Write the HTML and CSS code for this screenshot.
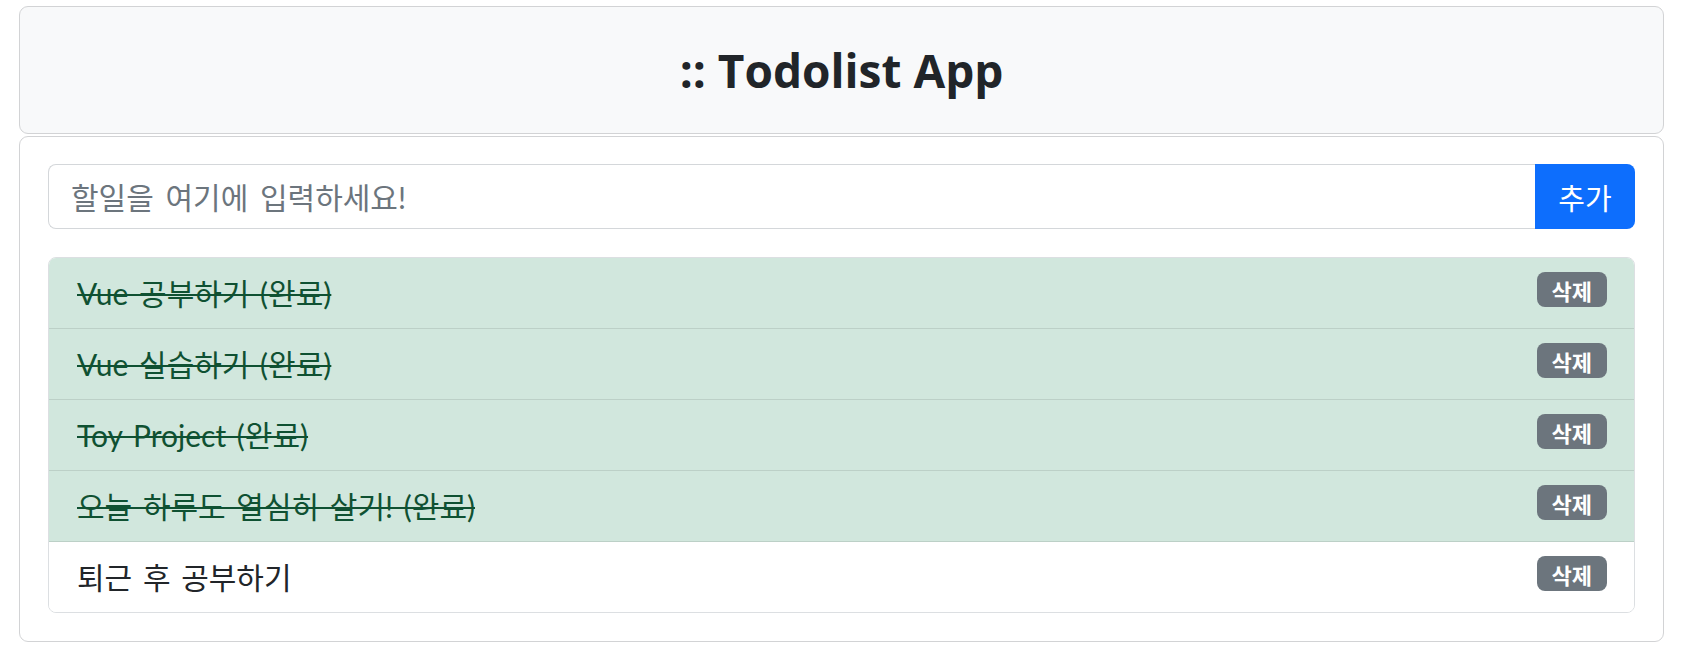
FILE: index.html
```html
<!DOCTYPE html>
<html lang="ko">
<head>
<meta charset="utf-8">
<title>Todolist App</title>
<link rel="stylesheet" href="styles.css">
</head>
<body>
<div class="app">
  <header class="card header-card">
    <h1 class="title">:: Todolist App</h1>
  </header>
  <main class="card body-card">
    <div class="input-group">
      <input class="todo-input" type="text" placeholder="할일을 여기에 입력하세요!">
      <button class="add-btn" type="button">추가</button>
    </div>
    <ul class="todo-list">
      <li class="todo-item done"><span class="todo-text">Vue 공부하기 (완료)</span><span class="badge">삭제</span></li>
      <li class="todo-item done"><span class="todo-text">Vue 실습하기 (완료)</span><span class="badge">삭제</span></li>
      <li class="todo-item done"><span class="todo-text">Toy Project (완료)</span><span class="badge">삭제</span></li>
      <li class="todo-item done"><span class="todo-text">오늘 하루도 열심히 살기! (완료)</span><span class="badge">삭제</span></li>
      <li class="todo-item"><span class="todo-text">퇴근 후 공부하기</span><span class="badge">삭제</span></li>
    </ul>
  </main>
</div>
</body>
</html>
```

FILE: styles.css
```css
* { box-sizing: border-box; }
html, body { margin: 0; padding: 0; background: #fff; }
body {
  font-family: "Lato", "Noto Sans CJK KR", sans-serif;
  color: #212529;
}
.app {
  padding: 6px 17px 0 19px;
  display: flex;
  flex-direction: column;
  gap: 2px;
}
.card {
  border: 1px solid #d2d3d5;
  border-radius: 9px;
  background: #fff;
}
.header-card {
  height: 128px;
  background: #f8f9fa;
  display: flex;
  align-items: center;
  justify-content: center;
}
.title {
  margin: 0;
  font-family: "Open Sans", "Noto Sans CJK KR", sans-serif;
  font-size: 46px;
  font-weight: 700;
  color: #212529;
  line-height: 1.2;
  padding-top: 2px;
}
.body-card {
  padding: 27px 28px 28px 28px;
}
.input-group {
  display: flex;
  height: 65px;
}
.todo-input {
  flex: 1;
  min-width: 0;
  height: 100%;
  border: 1px solid #d4d7da;
  border-right: none;
  border-radius: 8px 0 0 8px;
  padding: 0 22px;
  font-family: "Lato", "Noto Sans CJK KR", sans-serif;
  font-size: 30px;
  word-spacing: 4px;
  color: #212529;
  outline: none;
}
.todo-input::placeholder { color: #6c757d; }
.add-btn {
  width: 100px;
  height: 100%;
  border: none;
  background: #0d6efd;
  color: #fff;
  border-radius: 0 8px 8px 0;
  font-family: "Noto Sans CJK KR", sans-serif;
  font-size: 29px;
  padding: 0;
}
.todo-list {
  list-style: none;
  margin: 28px 0 0 0;
  padding: 0;
  border: 1px solid #dcdfe2;
  border-radius: 8px;
  overflow: hidden;
}
.todo-item {
  height: 70px;
  display: flex;
  align-items: center;
  justify-content: space-between;
  padding: 0 27px 3px 28px;
  font-size: 30px;
  word-spacing: 3px;
  color: #212529;
  background: #fff;
}
.todo-item + .todo-item { height: 71px; border-top: 1px solid #bcd0c7; }
.todo-item.done {
  background: #d1e7dd;
  color: #0f5132;
}
.todo-item.done .todo-text {
  text-decoration: line-through;
  text-decoration-thickness: 2px;
}
.badge {
  display: inline-flex;
  align-items: center;
  justify-content: center;
  height: 35px;
  padding: 0 15px;
  margin-bottom: 4px;
  border-radius: 8px;
  background: #6c757d;
  color: #fff;
  font-family: "Noto Sans CJK KR", sans-serif;
  font-size: 22px;
  font-weight: 700;
  word-spacing: 0;
}
```
